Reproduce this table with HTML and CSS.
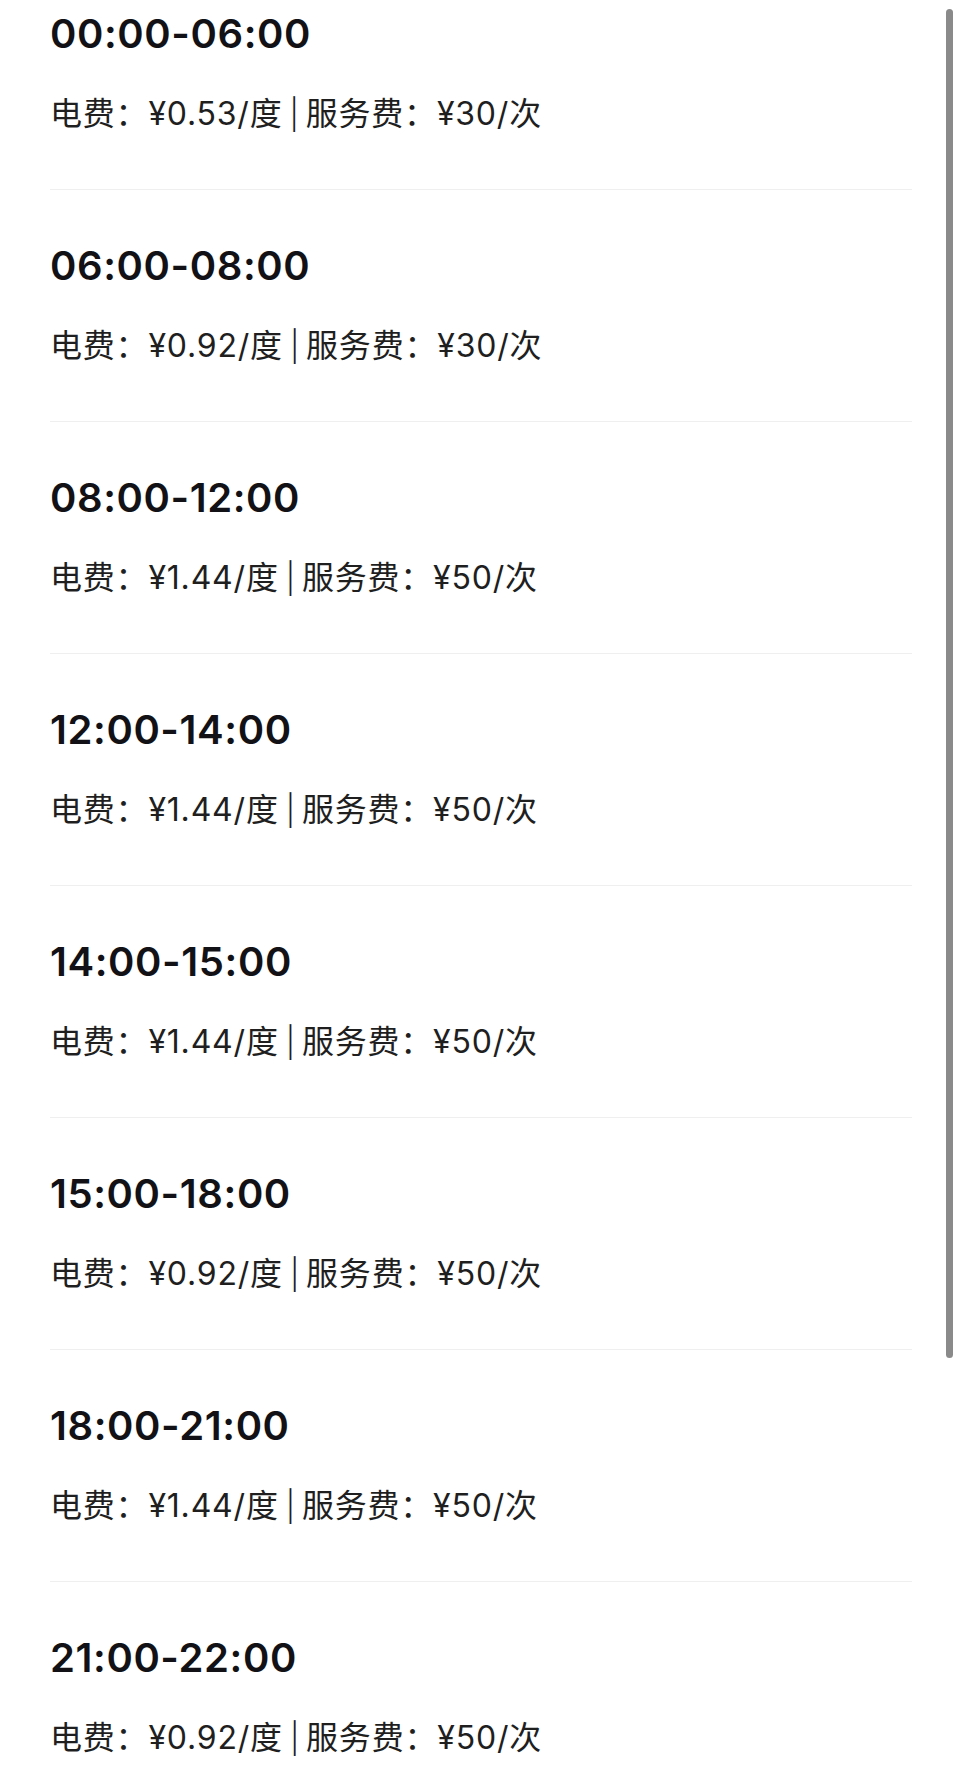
FILE: index.html
```html
<!DOCTYPE html>
<html lang="zh-CN">
<head>
<meta charset="utf-8">
<title>分时电价</title>
<link rel="stylesheet" href="styles.css">
</head>
<body>
<div class="scroll-indicator"></div>
<ul class="price-list">
  <li class="price-item">
    <div class="period">00:00-06:00</div>
    <div class="detail">电费：¥0.53/度<span class="sep">|</span>服务费：¥30/次</div>
  </li>
  <li class="price-item">
    <div class="period">06:00-08:00</div>
    <div class="detail">电费：¥0.92/度<span class="sep">|</span>服务费：¥30/次</div>
  </li>
  <li class="price-item">
    <div class="period">08:00-12:00</div>
    <div class="detail">电费：¥1.44/度<span class="sep">|</span>服务费：¥50/次</div>
  </li>
  <li class="price-item">
    <div class="period">12:00-14:00</div>
    <div class="detail">电费：¥1.44/度<span class="sep">|</span>服务费：¥50/次</div>
  </li>
  <li class="price-item">
    <div class="period">14:00-15:00</div>
    <div class="detail">电费：¥1.44/度<span class="sep">|</span>服务费：¥50/次</div>
  </li>
  <li class="price-item">
    <div class="period">15:00-18:00</div>
    <div class="detail">电费：¥0.92/度<span class="sep">|</span>服务费：¥50/次</div>
  </li>
  <li class="price-item">
    <div class="period">18:00-21:00</div>
    <div class="detail">电费：¥1.44/度<span class="sep">|</span>服务费：¥50/次</div>
  </li>
  <li class="price-item">
    <div class="period">21:00-22:00</div>
    <div class="detail">电费：¥0.92/度<span class="sep">|</span>服务费：¥50/次</div>
  </li>
</ul>
</body>
</html>
```

FILE: styles.css
```css
* {
  box-sizing: border-box;
}

html, body {
  margin: 0;
  padding: 0;
  background: #ffffff;
  overflow: hidden;
}

body {
  font-family: Inter, "Noto Sans CJK SC", sans-serif;
  color: #16161a;
}

.price-list {
  list-style: none;
  margin: -42px 48px 0 50px;
  padding: 0;
}

.price-item {
  display: flex;
  flex-direction: column;
  gap: 38px;
  padding: 52px 0 57px;
  border-bottom: 1px solid #efefef;
}

.period {
  font-size: 40px;
  line-height: 48px;
  font-weight: 600;
  letter-spacing: 0.6px;
  color: #121216;
}

.detail {
  font-size: 32px;
  line-height: 36px;
  font-weight: 400;
  letter-spacing: 0.8px;
  color: #1f1f1f;
}

.sep {
  font-family: Inter, sans-serif;
  font-weight: 300;
  font-size: 30px;
  margin: 0 6px 0 7px;
}

.scroll-indicator {
  position: fixed;
  top: 9px;
  left: 946px;
  width: 7px;
  height: 1349px;
  border-radius: 4px;
  background: #8a8a8a;
}
```
